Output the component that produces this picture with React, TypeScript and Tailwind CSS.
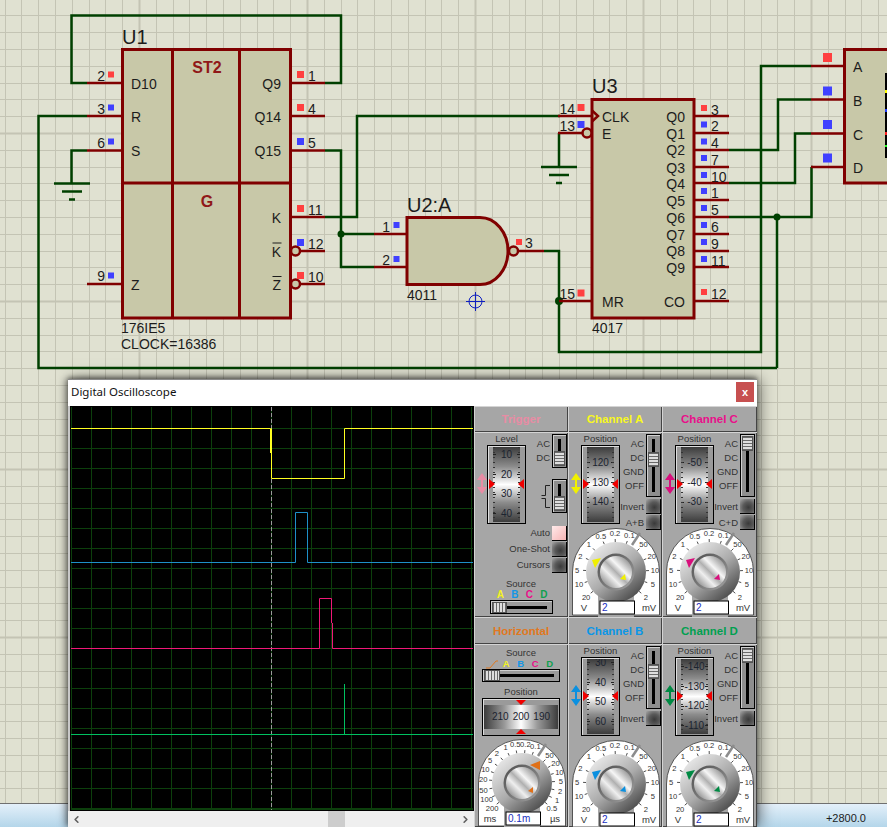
import React from 'react';
import { ChevronLeft, ChevronRight } from 'lucide-react';

const WIRE = '#004000';
const PIN = '#800000';
const CHIP = '#c8c8a8';
const RED = '#ff4040';
const BLUE = '#4040ff';

const T: React.FC<{ x: number; y: number; s?: number; a?: 'start' | 'end' | 'middle'; b?: boolean; c?: string; children: React.ReactNode }> = ({ x, y, s = 14, a = 'start', b, c = '#1c1c1c', children }) => (
  <text x={x} y={y} fontSize={s} textAnchor={a} fontWeight={b ? 700 : 400} fill={c}>{children}</text>
);

const Dot: React.FC<{ x: number; y: number; c: string; s?: number }> = ({ x, y, c, s = 7 }) => (
  <rect x={x - s / 2} y={y - s / 2} width={s} height={s} fill={c} />
);

const wires = [
  'M87 83H71.5V15.5H341V83H325',
  'M87 116H38.5V368H777',
  'M87 150.5H71.5V184',
  'M325 217H357V116H560',
  'M325 150.5H341V267H374',
  'M341 234H374',
  'M544 251H559V352H761V66H811',
  'M559 133V167',
  'M729 150H778V99.5H811',
  'M729 183H795V133.5H811',
  'M729 217H811.5V167H811',
  'M777 217V368',
];

const pins = [
  'M87 83H122M87 116H122M87 150.5H122M87 284H122',
  'M291 83H325M291 116H325M291 150.5H325M291 217H325M299 251H325M299 284H325',
  'M558 116H592M558 133H583M559 301H592',
  'M374 234H407M374 267H407M518 251H544',
  'M694 116H729M694 133H729M694 150H729M694 167H729M694 183H729M694 200H729M694 217H729M694 234H729M694 251H729M694 267H729M694 301H729',
  'M811 66H844M811 99.5H844M811 133.5H844M811 167H844',
];

const u3Pins: [string, string, number][] = [
  ['3', RED, 108], ['2', BLUE, 124.5], ['4', BLUE, 141.5], ['7', BLUE, 158], ['10', BLUE, 175], ['1', BLUE, 191],
  ['5', BLUE, 208], ['6', BLUE, 225], ['9', BLUE, 242], ['11', BLUE, 259], ['12', RED, 292],
];
const u3Out: [string, number][] = [
  ['Q0', 122], ['Q1', 139], ['Q2', 155], ['Q3', 173], ['Q4', 189], ['Q5', 206], ['Q6', 223], ['Q7', 240], ['Q8', 256], ['Q9', 273],
];

const Schematic: React.FC = () => {
  const vs = Array.from({ length: 54 }, (_, i) => 4.6 + i * 16.8);
  const hs = Array.from({ length: 49 }, (_, i) => -1.4 + i * 16.8);
  return (
    <svg width={887} height={803} viewBox="0 0 887 803" className="block">
      <rect width={887} height={803} fill="#e0e1d1" />
      {vs.map((x, i) => (
        <line key={i} x1={Math.round(x) + 0.5} x2={Math.round(x) + 0.5} y1={0} y2={803} stroke="#c4c4b4" strokeWidth={i % 10 === 8 ? 2 : 1} />
      ))}
      {hs.map((y, i) => (
        <line key={i} y1={Math.round(y) + 0.5} y2={Math.round(y) + 0.5} x1={0} x2={887} stroke="#c4c4b4" strokeWidth={i % 10 === 8 ? 2 : 1} />
      ))}

      <g fill="none" stroke={WIRE} strokeWidth={2.5}>
        {wires.map((d) => <path key={d} d={d} />)}
        <path d="M54 183.5H90M62 191.5H82M69 199.5H75" />
        <path d="M541 167H577M549 175H569M556 183H562" />
      </g>
      <circle cx={341} cy={234} r={3.5} fill={WIRE} />
      <circle cx={559} cy={301} r={4} fill={WIRE} />
      <circle cx={777} cy={217} r={3.5} fill={WIRE} />

      <g fill="none" stroke={PIN} strokeWidth={2.5}>
        {pins.map((d) => <path key={d} d={d} />)}
      </g>

      {/* U1 */}
      <g stroke={PIN} strokeWidth={3}>
        <rect x={122.5} y={49.5} width={168} height={268.5} fill={CHIP} />
        <path d="M172.5 49.5V318M239.5 49.5V318M122.5 183H290.5" fill="none" />
      </g>
      <circle cx={295.5} cy={251} r={4.5} fill={CHIP} stroke={PIN} strokeWidth={2.5} />
      <circle cx={295.5} cy={284} r={4.5} fill={CHIP} stroke={PIN} strokeWidth={2.5} />
      <T x={122} y={44} s={20}>U1</T>
      <T x={207} y={73} s={16} a="middle" b c="#901818">ST2</T>
      <T x={207} y={207} s={16} a="middle" b c="#901818">G</T>
      <T x={131} y={89}>D10</T>
      <T x={131} y={122}>R</T>
      <T x={131} y={156}>S</T>
      <T x={131} y={290}>Z</T>
      <T x={281} y={89} a="end">Q9</T>
      <T x={281} y={122} a="end">Q14</T>
      <T x={281} y={156} a="end">Q15</T>
      <T x={281} y={223} a="end">K</T>
      <T x={281} y={257} a="end">K</T>
      <T x={281} y={290} a="end">Z</T>
      <path d="M272.5 243H281.5M272.5 276.5H281.5" stroke="#1c1c1c" strokeWidth={1} />
      <T x={121} y={333}>176IE5</T>
      <T x={121} y={349}>CLOCK=16386</T>
      {([['2', 81, RED, 74.5], ['3', 114, BLUE, 107.5], ['6', 148, BLUE, 141.5], ['9', 281, BLUE, 275.5]] as [string, number, string, number][]).map(([n, y, c, d]) => (
        <g key={n}>
          <T x={105} y={y} a="end">{n}</T>
          <Dot x={111} y={d} c={c} s={6} />
        </g>
      ))}
      {([['1', 81, RED, 74.5], ['4', 114, RED, 107.5], ['5', 148, BLUE, 141.5], ['11', 215, RED, 208.5], ['12', 249, BLUE, 242.5], ['10', 282, RED, 275.5]] as [string, number, string, number][]).map(([n, y, c, d]) => (
        <g key={n}>
          <T x={308} y={y}>{n}</T>
          <Dot x={300.5} y={d} c={c} />
        </g>
      ))}

      {/* U2 */}
      <path d="M407 217.5H480A28 33.5 0 0 1 480 284.5H407Z" fill={CHIP} stroke={PIN} strokeWidth={3} />
      <circle cx={513.5} cy={251} r={4.5} fill={CHIP} stroke={PIN} strokeWidth={2.5} />
      <T x={407} y={212} s={20}>U2:A</T>
      <T x={407} y={300}>4011</T>
      <T x={390} y={232} a="end">1</T>
      <T x={390} y={265} a="end">2</T>
      <Dot x={396.5} y={225} c={BLUE} s={6} />
      <Dot x={396.5} y={259} c={BLUE} s={6} />
      <Dot x={519} y={242} c={RED} s={6} />
      <T x={525} y={248}>3</T>

      {/* U3 */}
      <rect x={592} y={99.5} width={102} height={218.5} fill={CHIP} stroke={PIN} strokeWidth={3} />
      <path d="M592 110.5L598 116L592 121.5" fill="none" stroke={PIN} strokeWidth={2.5} />
      <circle cx={587} cy={133} r={4.5} fill={CHIP} stroke={PIN} strokeWidth={2.5} />
      <T x={592} y={93} s={20}>U3</T>
      <T x={592} y={333}>4017</T>
      <T x={602} y={122}>CLK</T>
      <T x={602} y={139}>E</T>
      <T x={602} y={307}>MR</T>
      <T x={685} y={307} a="end">CO</T>
      {u3Out.map(([n, y]) => <T key={n} x={685} y={y} a="end">{n}</T>)}
      <T x={575} y={114} a="end">14</T>
      <T x={575} y={131} a="end">13</T>
      <T x={575} y={299} a="end">15</T>
      <Dot x={581} y={107.5} c={RED} />
      <Dot x={581} y={124.5} c={BLUE} />
      <Dot x={581} y={293} c={RED} />
      {u3Pins.map(([n, c, y]) => (
        <g key={n}>
          <Dot x={704} y={y} c={c} s={6} />
          <T x={711} y={y + 6.5}>{n}</T>
        </g>
      ))}

      {/* logic analyser, cut by the window edge */}
      <rect x={844.5} y={49.5} width={50} height={133.5} fill={CHIP} stroke={PIN} strokeWidth={3} />
      <T x={853} y={72}>A</T>
      <T x={853} y={106}>B</T>
      <T x={853} y={140}>C</T>
      <T x={853} y={173}>D</T>
      <rect x={885} y={73} width={4} height={85} fill="#000" />
      <rect x={885} y={90} width={2} height={3} fill="#ffff00" />
      <rect x={885} y={109} width={2} height={3} fill="#2040ff" />
      <rect x={885} y={132} width={2} height={3} fill="#ff2020" />
      <rect x={885} y={145} width={2} height={2} fill="#20ff20" />
      <Dot x={827.5} y={57.5} c={RED} s={9} />
      <Dot x={827.5} y={91} c={BLUE} s={9} />
      <Dot x={827.5} y={124.5} c={BLUE} s={9} />
      <Dot x={827.5} y={158} c={BLUE} s={9} />

      {/* origin marker */}
      <g fill="none" stroke="#1020c0" strokeWidth={1}>
        <circle cx={475.5} cy={301.5} r={6.5} />
        <path d="M475.5 292V311M466 301.5H485" />
      </g>
    </svg>
  );
};

const Screen: React.FC = () => {
  const vs = Array.from({ length: 20 }, (_, i) => 91 + i * 20);
  const hs = Array.from({ length: 20 }, (_, i) => 428 + i * 20);
  return (
    <svg width={402} height={403} viewBox="71 407 402 403" className="block bg-black">
      <g stroke="#0c3f0c" strokeWidth={1}>
        {vs.map((x) => <line key={x} x1={x + 0.5} x2={x + 0.5} y1={407} y2={810} />)}
        {hs.map((y) => <line key={y} y1={y + 0.5} y2={y + 0.5} x1={71} x2={473} />)}
        <path d="M71 809.5H473M71.5 407V810" />
      </g>
      <line x1={271.5} x2={271.5} y1={407} y2={810} stroke="#9a9a9a" strokeDasharray="4 2" />
      <g fill="none" strokeWidth={1}>
        <path d="M71 428.5H270.5V453" stroke="#ffff20" />
        <path d="M271.5 428.5V478.5H344.5V428.5H473" stroke="#ffff20" />
        <path d="M71 562.5H295.5V512.5H307.5V562.5H473" stroke="#1e90c8" />
        <path d="M71 648.5H319.5V598.5H331.5V623M332.5 623V648.5H473" stroke="#f01878" />
        <path d="M344.5 684V734.5M71 734.5H473" stroke="#00c060" />
      </g>
    </svg>
  );
};

const Switch: React.FC<{ tall?: boolean; thumb: string }> = ({ tall, thumb }) => (
  <div className={`relative flex w-[15px] shrink-0 justify-center border border-black bg-[#8e8e8e] py-[4px] shadow-[inset_1px_1px_0_#cfcfcf] ${tall ? 'h-[63px]' : 'h-[34px]'}`}>
    <div className="w-[3px] bg-black" />
    <div className={`absolute left-px h-[15px] w-[11px] border border-[#555] bg-[repeating-linear-gradient(to_bottom,#6a6a6a_0_1px,#dedede_1px_3px)] ${thumb}`} />
  </div>
);

const SliderH: React.FC<{ className: string; thumb: string }> = ({ className, thumb }) => (
  <div className={`relative flex items-center border border-black bg-[#9a9a9a] px-[5px] shadow-[inset_1px_1px_0_#cfcfcf] ${className}`}>
    <div className="h-[3px] w-full bg-black" />
    <div className={`absolute left-px h-[11px] border border-[#555] bg-[repeating-linear-gradient(to_right,#6a6a6a_0_1px,#dedede_1px_3px)] ${thumb}`} />
  </div>
);

const Btn: React.FC<{ on?: boolean }> = ({ on }) => (
  <div className={`h-[15px] w-[15px] shrink-0 border-r border-b border-black ${on ? 'bg-[linear-gradient(135deg,#ffeaea,#f6b4b4)]' : 'bg-[radial-gradient(circle_at_60%_60%,#3a3a3a,#5a5a5a_45%,#a8a8a8)]'}`} />
);

const Tape: React.FC<{ labels: string[]; shift: string }> = ({ labels, shift }) => (
  <div className="relative h-[79px] w-[39px] border border-black bg-[#9a9a9a] px-[5px] py-px shadow-[inset_1px_1px_0_#dedede]">
    <div className="relative h-full w-[27px] overflow-hidden bg-[linear-gradient(to_bottom,#3c3c3c,#8c8c8c_26%,#ffffff_50%,#8c8c8c_74%,#3c3c3c)]">
      <div className="absolute inset-y-0 left-0 w-[2px] bg-[repeating-linear-gradient(to_bottom,#333_0_1px,transparent_1px_5px)]" />
      <div className="absolute inset-y-0 right-0 w-[2px] bg-[repeating-linear-gradient(to_bottom,#333_0_1px,transparent_1px_5px)]" />
      <div className={shift}>
        {labels.map((l) => (
          <div key={l} className="flex h-[19.7px] items-center justify-between text-[10px] leading-none text-[#1c2430]">
            <i className="h-px w-[3px] bg-[#222]" />
            <span>{l}</span>
            <i className="h-px w-[3px] bg-[#222]" />
          </div>
        ))}
      </div>
    </div>
    <div className="absolute top-[33px] left-px h-0 w-0 border-y-[5px] border-l-[6px] border-y-transparent border-l-[#f00000]" />
    <div className="absolute top-[33px] right-px h-0 w-0 border-y-[5px] border-r-[6px] border-y-transparent border-r-[#f00000]" />
  </div>
);

const Arrow: React.FC<{ c: string }> = ({ c }) => (
  <svg width={10} height={21} viewBox="0 0 10 21" className="mt-[41px] shrink-0">
    <path d="M5 0L10 7H6V14H10L5 21L0 14H4V7H0Z" fill={c} />
  </svg>
);

const Knob: React.FC<{
  id: string;
  c: string;
  left: string[];
  right: string[];
  units: [string, string];
  value: string;
  big: string;
  small: string;
}> = ({ id, c, left, right, units, value, big, small }) => {
  const polar = (deg: number, r: number) => {
    const t = (deg * Math.PI) / 180;
    return [46 + r * Math.sin(t), 45 - r * Math.cos(t)];
  };
  const marks: [string, number][] = [
    ...left.map((l, i): [string, number] => [l, -130 + (i * 150) / (left.length - 1)]),
    ...right.map((l, i): [string, number] => [l, 45 + (i * 85) / (right.length - 1)]),
  ];
  return (
    <svg width={92} height={90} viewBox="0 0 92 90" className="ml-[2px] block overflow-visible">
      <defs>
        <linearGradient id={`${id}-body`} x1="0.15" y1="0.1" x2="0.85" y2="0.95">
          <stop offset="0" stopColor="#e8e8e8" />
          <stop offset="0.5" stopColor="#ababab" />
          <stop offset="1" stopColor="#444" />
        </linearGradient>
        <linearGradient id={`${id}-ring`} x1="0.1" y1="0.1" x2="0.9" y2="0.9">
          <stop offset="0" stopColor="#555" />
          <stop offset="1" stopColor="#9a9a9a" />
        </linearGradient>
        <linearGradient id={`${id}-cap`} x1="0.1" y1="0.9" x2="0.9" y2="0.1">
          <stop offset="0" stopColor="#8a8a8a" />
          <stop offset="0.32" stopColor="#efefef" />
          <stop offset="0.5" stopColor="#b0b0b0" />
          <stop offset="0.66" stopColor="#f6f6f6" />
          <stop offset="1" stopColor="#8c8c8c" />
        </linearGradient>
      </defs>
      <path d="M2.5 88V45A43.5 43.5 0 0 1 89.5 45V88Z" fill="#fff" stroke="#333" strokeWidth={0.8} />
      <rect x={28} y={69} width={36} height={21} fill="#a6a6a6" />
      <path d="M62 18L70 6" stroke="#8c8c8c" strokeWidth={2.5} />
      {marks.map(([l, a], i) => {
        const [x1, y1] = polar(a, 30);
        const [x2, y2] = polar(a, 33);
        const [tx, ty] = polar(a, 39);
        return (
          <g key={i}>
            <line x1={x1} y1={y1} x2={x2} y2={y2} stroke="#222" strokeWidth={0.8} />
            <text x={tx} y={ty + 2.8} fontSize={7.6} textAnchor="middle" fill="#333">{l}</text>
          </g>
        );
      })}
      <circle cx={46} cy={45} r={30} fill={`url(#${id}-body)`} />
      <circle cx={46} cy={45} r={18.5} fill={`url(#${id}-ring)`} />
      <circle cx={46} cy={45} r={16} fill={`url(#${id}-cap)`} />
      <g transform="translate(46 45)" fill={c}>
        <polygon points={big} />
        <polygon points={small} />
      </g>
      <rect x={30} y={74} width={34.5} height={13} fill="#fff" stroke="#000" />
      <text x={32} y={84} fontSize={10} fill="#2030c0">{value}</text>
      <text x={14} y={84} fontSize={9.5} textAnchor="middle" fill="#333">{units[0]}</text>
      <text x={79} y={84} fontSize={9.5} textAnchor="middle" fill="#333">{units[1]}</text>
    </svg>
  );
};

const Title: React.FC<{ c: string; h: string; children: React.ReactNode }> = ({ c, h, children }) => (
  <div className={`flex items-center justify-center pt-[2px] text-[11.5px] leading-none font-bold shadow-[inset_1px_1px_0_#d4d4d4,inset_-1px_-1px_0_#444] ${c} ${h}`}>{children}</div>
);

const Lbl: React.FC<{ children: React.ReactNode }> = ({ children }) => (
  <div className="text-[9.5px] leading-[12px] whitespace-nowrap text-[#333]">{children}</div>
);

const Body: React.FC<{ h: string; children: React.ReactNode }> = ({ h, children }) => (
  <div className={`overflow-hidden shadow-[inset_1px_1px_0_#d4d4d4,inset_-1px_-1px_0_#444] ${h}`}>{children}</div>
);

const chLeft = ['20', '10', '5', '2', '1', '0.5', '0.2', '0.1'];
const chRight = ['50', '20', '10', '5', '2'];

const Channel: React.FC<{
  id: string;
  c: string;
  labels: string[];
  shift: string;
  thumb: string;
  extra?: string;
}> = ({ id, c, labels, shift, thumb, extra }) => (
  <Body h="h-full">
    <div className="flex h-[95px]">
      <div className="flex w-[52px] shrink-0 pl-[3px]">
        <Arrow c={c} />
        <div className="w-[39px] text-center">
          <div className="h-[13px] pt-px"><Lbl>Position</Lbl></div>
          <Tape labels={labels} shift={shift} />
        </div>
      </div>
      <div className="flex w-[42px] shrink-0 flex-col items-end pt-[2px] pr-px">
        <div className="flex gap-[2px]">
          <div className="flex flex-col items-end pt-[4px]">
            {['AC', 'DC', 'GND', 'OFF'].map((l) => (
              <div key={l} className="h-[14px]"><Lbl>{l}</Lbl></div>
            ))}
          </div>
          <Switch tall thumb={thumb} />
        </div>
        <div className="mt-[2px] flex items-center gap-[2px]"><Lbl>Invert</Lbl><Btn /></div>
        {extra && <div className="mt-px flex items-center gap-[2px]"><Lbl>{extra}</Lbl><Btn /></div>}
      </div>
    </div>
    <Knob
      id={id}
      c={c}
      left={chLeft}
      right={chRight}
      units={['V', 'mV']}
      value="2"
      big="-24,-12 -15,-14 -21,-4"
      small="4,7 9,2 10,8"
    />
  </Body>
);

const Sources: React.FC = () => (
  <>
    <span className="w-[14.5px] text-center text-[#f4f420]">A</span>
    <span className="w-[14.5px] text-center text-[#1496e6]">B</span>
    <span className="w-[14.5px] text-center text-[#e8108a]">C</span>
    <span className="w-[14.5px] text-center text-[#10a050]">D</span>
  </>
);

const TriggerBody: React.FC = () => (
  <Body h="h-full">
    <div className="flex h-[93px]">
      <div className="flex w-[52px] shrink-0 pl-[3px]">
        <Arrow c="#e88ca4" />
        <div className="w-[39px] text-center">
          <div className="h-[13px] pt-px"><Lbl>Level</Lbl></div>
          <Tape labels={['10', '20', '30', '40']} shift="-mt-[2px]" />
        </div>
      </div>
      <div className="flex w-[42px] shrink-0 flex-col items-end pt-[2px] pr-px">
        <div className="flex gap-[2px]">
          <div className="flex flex-col items-end pt-[4px]">
            <div className="h-[14px]"><Lbl>AC</Lbl></div>
            <div className="h-[14px]"><Lbl>DC</Lbl></div>
          </div>
          <Switch thumb="top-[16px]" />
        </div>
        <div className="mt-[11px] flex items-center gap-[2px]">
          <svg width={9} height={25} viewBox="0 0 9 25" fill="none" stroke="#222" strokeWidth={1}>
            <path d="M9 1.5H4.5V11.5H0.5M0.5 14.5H4.5V23.5H9" />
          </svg>
          <Switch thumb="top-[16px]" />
        </div>
      </div>
    </div>
    <div className="flex flex-col items-end pr-px">
      <div className="flex h-[16px] items-center gap-[2px]"><Lbl>Auto</Lbl><Btn on /></div>
      <div className="flex h-[16px] items-center gap-[2px]"><Lbl>One-Shot</Lbl><Btn /></div>
      <div className="flex h-[16px] items-center gap-[2px]"><Lbl>Cursors</Lbl><Btn /></div>
    </div>
    <div className="mt-[5px] h-[12px] text-center"><Lbl>Source</Lbl></div>
    <div className="flex h-[10px] justify-center pl-[2px] text-[10px] leading-[10px] font-bold"><Sources /></div>
    <SliderH className="mx-auto h-[14px] w-[63px]" thumb="w-[15px]" />
  </Body>
);

const HorizontalBody: React.FC = () => (
  <Body h="h-full">
    <div className="h-[15px] pt-[3px] text-center"><Lbl>Source</Lbl></div>
    <div className="flex h-[10px] items-center justify-center text-[9.5px] leading-[10px] font-bold">
      <svg width={14} height={9} viewBox="0 0 14 9" className="shrink-0" fill="none" stroke="#e07820" strokeWidth={1}>
        <path d="M1 8H5L11 1H13" />
      </svg>
      <Sources />
    </div>
    <SliderH className="mx-auto h-[13px] w-[78px]" thumb="w-[16px]" />
    <div className="mt-[4px] h-[12px] text-center"><Lbl>Position</Lbl></div>
    <div className="relative mx-auto h-[38px] w-[78px] border border-black bg-[#9a9a9a] px-px py-[6px] shadow-[inset_1px_1px_0_#dedede]">
      <div className="flex h-full items-center justify-center gap-[4px] bg-[linear-gradient(to_right,#3c3c3c,#9a9a9a_28%,#ffffff_50%,#9a9a9a_72%,#3c3c3c)] text-[10px] leading-none text-[#1c2430]">
        <span>210</span><span>200</span><span>190</span>
      </div>
      <div className="absolute top-px left-[33px] h-0 w-0 border-x-[5px] border-t-[5px] border-x-transparent border-t-[#f00000]" />
      <div className="absolute bottom-px left-[33px] h-0 w-0 border-x-[5px] border-b-[5px] border-x-transparent border-b-[#f00000]" />
    </div>
    <div className="mt-[2px]">
      <Knob
        id="hor"
        c="#e07018"
        left={['200', '100', '50', '20', '10', '5', '2', '1', '0.5', '0.2', '0.1']}
        right={['50', '20', '10', '5', '2', '1', '0.5']}
        units={['ms', 'µs']}
        value="0.1m"
        big="8,-18 18,-22 18,-13"
        small="6,8 11,4 11,10"
      />
    </div>
  </Body>
);

export default function App() {
  return (
    <div className="relative flex h-[827px] w-[887px] flex-col overflow-hidden [font-family:'Liberation_Sans',Arial,sans-serif]">
      <Schematic />
      <div className="flex h-[24px] items-center justify-end border-t border-[#707070] bg-[linear-gradient(to_bottom,#e4f0fa,#b4d6ea)] pt-[6px] pr-[21px] text-[11px] leading-none text-[#1c1c1c]">
        +2800.0
      </div>

      {/* oscilloscope window */}
      <div className="absolute top-[379px] left-[68px] flex w-[689px] flex-col bg-[#a6a6a6] shadow-[3px_0_14px_rgba(0,0,0,0.5),0_-2px_4px_rgba(0,0,0,0.3),-3px_0_6px_rgba(0,0,0,0.3)]">
        <div className="flex h-[27px] items-start justify-between border-t border-[#8a8a8a] bg-white pr-[3px] pb-px pl-[3px]">
          <span className="pt-[3px] text-[11.5px] text-[#111] [font-family:'Noto_Sans',sans-serif]">Digital Oscilloscope</span>
          <div className="mt-[2px] flex h-[20px] w-[18px] items-center justify-center bg-[#c75050] text-[11px] leading-none font-bold text-white">x</div>
        </div>
        <div className="flex h-[421px]">
          <div className="flex w-[406px] shrink-0 flex-col bg-[#c8c8c8] pl-[2px]">
            <div className="w-[404px] border border-black">
              <Screen />
            </div>
            <div className="-ml-[2px] flex h-[16px] items-center bg-[#efefef]">
              <ChevronLeft size={11} strokeWidth={3.5} className="ml-[3px] text-[#606060]" />
              <div className="ml-[246px] h-[16px] w-[17px] bg-[#cdcdcd]" />
              <ChevronRight size={11} strokeWidth={3.5} className="mr-[3px] ml-auto text-[#606060]" />
            </div>
          </div>

          <div className="grid w-[283px] grid-cols-[94px_94px_95px] grid-rows-[26px_185px_27px_183px]">
            <Title c="text-[#e88ca4]" h="h-[26px]">Trigger</Title>
            <Title c="text-[#f8f820]" h="h-[26px]">Channel A</Title>
            <Title c="text-[#e8108a]" h="h-[26px]">Channel C</Title>

            <TriggerBody />
            <Channel id="cha" c="#f0f000" labels={['120', '130', '140']} shift="mt-[6px]" thumb="top-[17px]" extra="A+B" />
            <Channel id="chc" c="#d80f7c" labels={['-50', '-40', '-30']} shift="mt-[6px]" thumb="top-px" extra="C+D" />

            <Title c="text-[#e07820]" h="h-[27px]">Horizontal</Title>
            <Title c="text-[#0a96e8]" h="h-[27px]">Channel B</Title>
            <Title c="text-[#00a050]" h="h-[27px]">Channel D</Title>

            <HorizontalBody />
            <Channel id="chb" c="#0a90e0" labels={['30', '40', '50', '60']} shift="-mt-[6px]" thumb="top-[17px]" />
            <Channel id="chd" c="#008a44" labels={['-140', '-130', '-120', '-110']} shift="-mt-[2px]" thumb="top-px" />
          </div>
        </div>
      </div>
    </div>
  );
}
